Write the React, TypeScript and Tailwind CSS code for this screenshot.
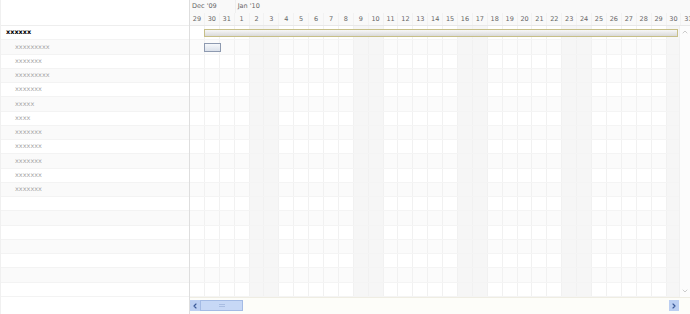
import { ChevronLeft, ChevronRight, ChevronUp, ChevronDown } from "lucide-react";

const tasks = [
  { name: "xxxxxx", summary: true },
  { name: "xxxxxxxxx" },
  { name: "xxxxxxx" },
  { name: "xxxxxxxxx" },
  { name: "xxxxxxx" },
  { name: "xxxxx" },
  { name: "xxxx" },
  { name: "xxxxxxx" },
  { name: "xxxxxxx" },
  { name: "xxxxxxx" },
  { name: "xxxxxxx" },
  { name: "xxxxxxx" },
];

const ROWS = 19;

// Dec 29 2009 .. Jan 31 2010
const days = [
  { d: 29, weekend: false },
  { d: 30, weekend: false },
  { d: 31, weekend: false },
  ...Array.from({ length: 31 }, (_, i) => ({
    d: i + 1,
    weekend: (i + 1) % 7 === 2 || (i + 1) % 7 === 3,
  })),
];

export default function App() {
  const rows = Array.from({ length: ROWS }, (_, i) => tasks[i] ?? null);

  return (
    <div className="w-[690px] h-[314px] bg-white flex overflow-hidden font-['DejaVu_Sans',sans-serif]">
      {/* LEFT: task tree */}
      <div className="w-[190px] shrink-0 flex flex-col border-r border-[#dedede] border-l border-l-[#f0f0f0]">
        <div className="h-[26px] shrink-0 border-b border-[#eeeeee] bg-white" />
        {rows.map((t, i) => (
          <div
            key={i}
            className={`h-[14.25px] shrink-0 flex items-center border-b border-[#f3f3f3] ${
              i % 2 === 1 ? "bg-[#fafafa]" : "bg-white"
            }`}
          >
            {t &&
              (t.summary ? (
                <span className="pl-[5px] text-[6.5px] font-bold text-black leading-none">
                  {t.name}
                </span>
              ) : (
                <span className="pl-[14px] text-[6.5px] text-[#a3a3a3] leading-none">
                  {t.name}
                </span>
              ))}
          </div>
        ))}
        <div className="flex-1 bg-white" />
      </div>

      {/* RIGHT: schedule */}
      <div className="flex-1 flex flex-col min-w-0">
        {/* header */}
        <div className="h-[26px] shrink-0 flex flex-col bg-[#f9f9f9] border-b border-[#e8e8e8] overflow-hidden">
          <div className="h-[13px] flex items-center text-[6.5px] text-[#666] leading-none">
            <div className="w-[44.7px] shrink-0 pl-[2px]">Dec '09</div>
            <div className="flex-1 pl-[2px] border-l border-[#efefef] h-full flex items-center">
              Jan '10
            </div>
          </div>
          <div className="h-[13px] flex text-[6.5px] text-[#666] leading-none">
            {days.map((c, i) => (
              <div
                key={i}
                className="w-[14.9px] shrink-0 flex items-center justify-center border-r border-[#f2f2f2]"
              >
                {c.d}
              </div>
            ))}
          </div>
        </div>

        {/* body */}
        <div className="flex h-[270.75px] shrink-0">
          <div className="relative flex-1 overflow-hidden flex flex-col">
            {Array.from({ length: ROWS }, (_, r) => (
              <div
                key={r}
                className={`h-[14.25px] shrink-0 flex border-b border-[#f4f4f4] ${
                  r % 2 === 1 ? "bg-[#fbfbfb]" : "bg-white"
                }`}
              >
                {days.map((c, i) => (
                  <div
                    key={i}
                    className={`w-[14.9px] shrink-0 border-r border-[#f1f1f1] ${
                      c.weekend ? "bg-[#f6f6f6]" : ""
                    }`}
                  />
                ))}
              </div>
            ))}

            {/* summary bar */}
            <div className="absolute left-[14px] top-[2.5px] w-[474px] h-[8.5px] border border-[#c7bf88] bg-gradient-to-b from-[#f7f7f7] to-[#dadada]" />
            {/* task bar */}
            <div className="absolute left-[13.5px] top-[17px] w-[17.5px] h-[8.5px] border border-[#8e9ab0] bg-gradient-to-b from-[#f6f8fb] to-[#dbe1ea]" />
          </div>

          {/* vertical scrollbar */}
          <div className="w-[11px] shrink-0 bg-[#fcfcfc] border-l border-[#f0f0f0] flex flex-col justify-between items-center py-[2px]">
            <ChevronUp className="w-[8px] h-[8px] text-[#cccccc]" strokeWidth={3} />
            <ChevronDown className="w-[8px] h-[8px] text-[#cccccc]" strokeWidth={3} />
          </div>
        </div>

        {/* horizontal scrollbar */}
        <div className="flex-1 bg-[#fdfdf9] border-t border-[#efede3] flex items-center pr-[11px]">
          <div className="w-[10px] h-[11px] bg-[#bccff2] flex items-center justify-center">
            <ChevronLeft className="w-[8px] h-[8px] text-[#3b5998]" strokeWidth={3.5} />
          </div>
          <div className="w-[43px] h-[11px] bg-[#c7d8f6] border border-[#a4bbe5] flex items-center justify-center">
            <div className="w-[6px] h-[3px] border-y border-[#a9bde2]" />
          </div>
          <div className="flex-1" />
          <div className="w-[10px] h-[11px] bg-[#bccff2] flex items-center justify-center">
            <ChevronRight className="w-[8px] h-[8px] text-[#3b5998]" strokeWidth={3.5} />
          </div>
        </div>
      </div>
    </div>
  );
}
